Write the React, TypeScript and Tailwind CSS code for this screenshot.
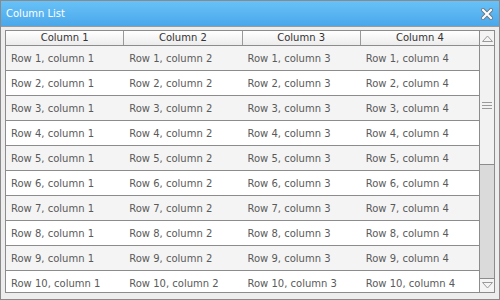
const rows = Array.from({ length: 10 }, (_, i) => i + 1)
const cols = [1, 2, 3, 4]

function CloseIcon() {
  return (
    <svg width="12" height="12" viewBox="0 0 12 12">
      <path d="M2 2 L10 10 M10 2 L2 10" stroke="#6b7a86" strokeWidth="4" strokeLinecap="square" />
      <path d="M2 2 L10 10 M10 2 L2 10" stroke="#ffffff" strokeWidth="2" strokeLinecap="square" />
    </svg>
  )
}

function ScrollBar() {
  return (
    <div className="flex w-[15px] flex-col border-l border-[#8c8c8c] bg-[#dadada]">
      <div className="flex h-[14px] items-center justify-center bg-[#f4f4f4]">
        <svg width="11" height="7" viewBox="0 0 11 7">
          <path d="M0.5 6.5 L5.5 1 L10.5 6.5 Z" fill="none" stroke="#9a9a9a" />
        </svg>
      </div>
      <div className="flex h-[120px] items-center justify-center border-y border-[#8c8c8c] bg-[#f2f2f2]">
        <div className="flex w-[10px] flex-col gap-[2px]">
          <div className="h-px bg-[#9a9a9a]" />
          <div className="h-px bg-[#9a9a9a]" />
          <div className="h-px bg-[#9a9a9a]" />
        </div>
      </div>
      <div className="flex-1" />
      <div className="flex h-[14px] items-center justify-center border-t border-[#8c8c8c] bg-[#f4f4f4]">
        <svg width="11" height="7" viewBox="0 0 11 7">
          <path d="M0.5 0.5 L5.5 6 L10.5 0.5 Z" fill="none" stroke="#9a9a9a" />
        </svg>
      </div>
    </div>
  )
}

export default function App() {
  return (
    <div className="flex h-[300px] w-[500px] flex-col border border-[#8a8a8a] bg-[#ededed] font-['DejaVu_Sans',sans-serif]">
      <div className="flex h-[26px] items-center justify-between border-b border-[#9a9a9a] bg-gradient-to-b from-[#68c2f8] to-[#4aa7ea] pl-[5px] pr-[6px]">
        <span className="text-[10px] text-white">Column List</span>
        <CloseIcon />
      </div>
      <div className="flex min-h-0 flex-1 px-[4px] pt-[3px] pb-[6px]">
        <div className="flex min-h-0 flex-1 border border-[#8c8c8c] bg-white">
          <div className="flex min-w-0 flex-1 flex-col overflow-hidden">
            <div className="grid h-[15px] shrink-0 grid-cols-4 border-b border-[#8c8c8c] bg-gradient-to-b from-white to-[#ececec]">
              {cols.map((c) => (
                <div
                  key={c}
                  className="flex items-center justify-center border-r border-[#9a9a9a] text-[10px] leading-none text-[#333333] last:border-r-0"
                >
                  Column {c}
                </div>
              ))}
            </div>
            {rows.map((r) => (
              <div
                key={r}
                className={`grid h-[25px] shrink-0 grid-cols-4 border-b border-[#8c8c8c] ${
                  r % 2 === 1 ? 'bg-[#f4f4f4]' : 'bg-white'
                }`}
              >
                {cols.map((c) => (
                  <div key={c} className="flex items-center px-[5px] text-[10px] text-[#5a5a5a] whitespace-nowrap">
                    Row {r}, column {c}
                  </div>
                ))}
              </div>
            ))}
          </div>
          <ScrollBar />
        </div>
      </div>
    </div>
  )
}
